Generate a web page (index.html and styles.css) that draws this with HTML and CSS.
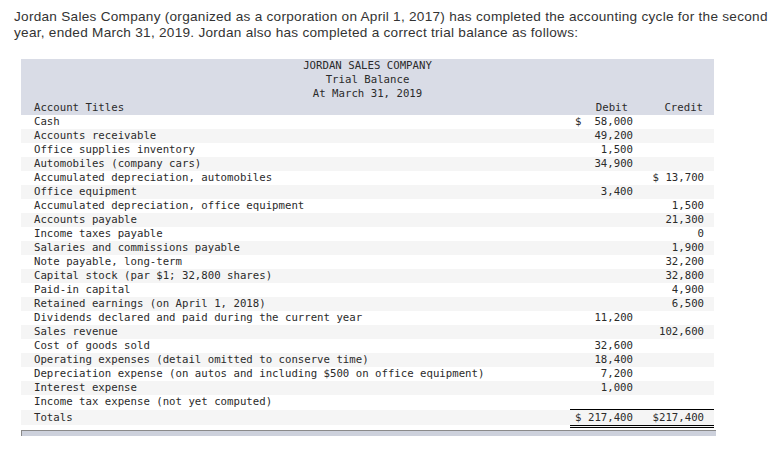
FILE: index.html
```html
<!DOCTYPE html>
<html lang="en">
<head>
<meta charset="utf-8">
<title>Jordan Sales Company Trial Balance</title>
<link rel="stylesheet" href="styles.css">
</head>
<body>
<div class="page">
  <p class="intro">Jordan Sales Company (organized as a corporation on April 1, 2017) has completed the accounting cycle for the second year, ended March 31, 2019. Jordan also has completed a correct trial balance as follows:</p>
  <div class="scroller">
    <table class="tb">
      <colgroup><col class="c-title"><col class="c-debit"><col class="c-credit"></colgroup>
      <thead>
        <tr><th colspan="3" class="center">JORDAN SALES COMPANY</th></tr>
        <tr><th colspan="3" class="center">Trial Balance</th></tr>
        <tr><th colspan="3" class="center">At March 31, 2019</th></tr>
        <tr><th class="title">Account Titles</th><th class="num hd-debit">Debit</th><th class="num hd-credit">Credit</th></tr>
      </thead>
      <tbody>
        <tr><td class="title">Cash</td><td class="num">$  58,000</td><td class="num cr"></td></tr>
        <tr><td class="title">Accounts receivable</td><td class="num">49,200</td><td class="num cr"></td></tr>
        <tr><td class="title">Office supplies inventory</td><td class="num">1,500</td><td class="num cr"></td></tr>
        <tr><td class="title">Automobiles (company cars)</td><td class="num">34,900</td><td class="num cr"></td></tr>
        <tr><td class="title">Accumulated depreciation, automobiles</td><td class="num"></td><td class="num cr">$ 13,700</td></tr>
        <tr><td class="title">Office equipment</td><td class="num">3,400</td><td class="num cr"></td></tr>
        <tr><td class="title">Accumulated depreciation, office equipment</td><td class="num"></td><td class="num cr">1,500</td></tr>
        <tr><td class="title">Accounts payable</td><td class="num"></td><td class="num cr">21,300</td></tr>
        <tr><td class="title">Income taxes payable</td><td class="num"></td><td class="num cr">0</td></tr>
        <tr><td class="title">Salaries and commissions payable</td><td class="num"></td><td class="num cr">1,900</td></tr>
        <tr><td class="title">Note payable, long-term</td><td class="num"></td><td class="num cr">32,200</td></tr>
        <tr><td class="title">Capital stock (par $1; 32,800 shares)</td><td class="num"></td><td class="num cr">32,800</td></tr>
        <tr><td class="title">Paid-in capital</td><td class="num"></td><td class="num cr">4,900</td></tr>
        <tr><td class="title">Retained earnings (on April 1, 2018)</td><td class="num"></td><td class="num cr">6,500</td></tr>
        <tr><td class="title">Dividends declared and paid during the current year</td><td class="num">11,200</td><td class="num cr"></td></tr>
        <tr><td class="title">Sales revenue</td><td class="num"></td><td class="num cr">102,600</td></tr>
        <tr><td class="title">Cost of goods sold</td><td class="num">32,600</td><td class="num cr"></td></tr>
        <tr><td class="title">Operating expenses (detail omitted to conserve time)</td><td class="num">18,400</td><td class="num cr"></td></tr>
        <tr><td class="title">Depreciation expense (on autos and including $500 on office equipment)</td><td class="num">7,200</td><td class="num cr"></td></tr>
        <tr><td class="title">Interest expense</td><td class="num">1,000</td><td class="num cr"></td></tr>
        <tr><td class="title">Income tax expense (not yet computed)</td><td class="num"></td><td class="num cr"></td></tr>
        <tr class="total"><td class="title">Totals</td><td class="num">$ 217,400</td><td class="num cr">$217,400</td></tr>
      </tbody>
    </table>
    <div class="hscroll"></div>
  </div>
</div>
</body>
</html>
```

FILE: styles.css
```css
html, body {
  margin: 0;
  padding: 0;
  background: #fff;
}

.page {
  padding: 9px 0 0 14px;
}

.intro {
  margin: 0;
  width: 762px;
  font-family: "Liberation Sans", Arial, sans-serif;
  font-size: 13.6px;
  letter-spacing: 0.27px;
  line-height: 16px;
  color: #333;
}

.scroller {
  margin: 18px 0 0 7px;
  width: 695px;
}

.tb {
  width: 693px;
  table-layout: fixed;
  border-collapse: separate;
  border-spacing: 0;
  font-family: "DejaVu Sans Mono", "Liberation Mono", monospace;
  font-size: 10.7px;
  line-height: 14px;
  color: #2b2b2b;
}

.c-title { width: 549px; }
.c-debit { width: 63px; }
.c-credit { width: 81px; }

.tb th {
  background: #d9dce6;
  font-weight: normal;
  padding: 0;
  height: 14px;
  white-space: pre;
}

.tb th.center { text-align: center; }

.tb td {
  padding: 0;
  height: 14px;
  white-space: pre;
}

.tb .title {
  text-align: left;
  padding-left: 13px;
}

.tb .num { text-align: right; }
.tb .cr { padding-right: 10px; }
.tb th.hd-debit { padding-right: 5px; }
.tb th.hd-credit { padding-right: 11px; }

.tb tbody tr:nth-child(even) td { background: #f5f5f5; }

.tb tr.total td {
  height: 15px;
  line-height: 15px;
  border-top: 1px solid #fff;
  background: #f5f5f5;
}

.tb tr.total td.num {
  border-top: 1px solid #000;
  border-bottom: 3px double #000;
}

.tb tr.total td.title {
  border-bottom: 3px solid #fff;
}

.hscroll {
  margin-top: 2px;
  height: 5px;
  background: #cdd1dc;
  border-top: 1px solid #8a8a8a;
  border-left: 1px solid #8a8a8a;
}
```
